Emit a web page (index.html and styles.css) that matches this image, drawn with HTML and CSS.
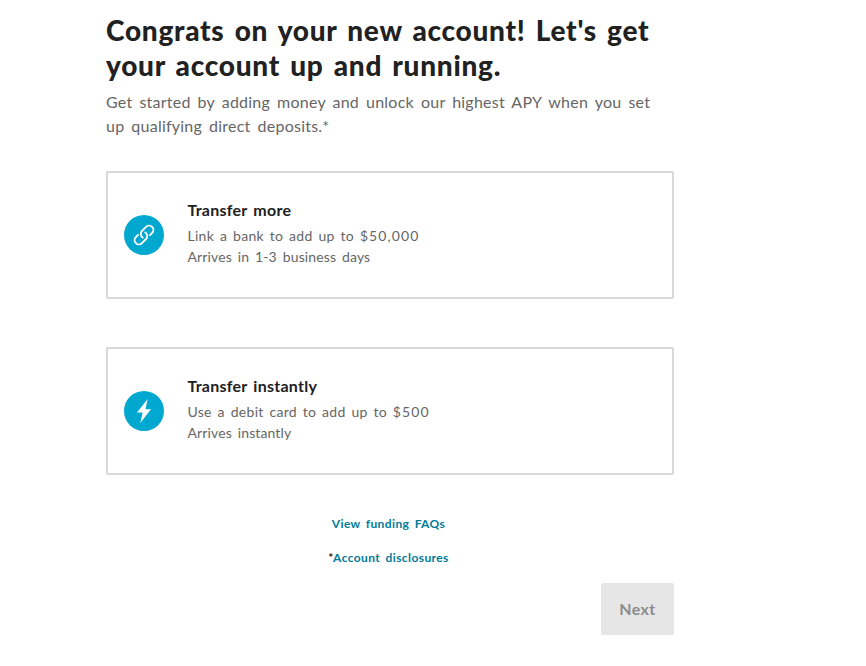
FILE: index.html
```html
<!DOCTYPE html>
<html lang="en">
<head>
  <meta charset="UTF-8">
  <meta name="viewport" content="width=device-width, initial-scale=1.0">
  <link rel="stylesheet" href="styles.css">
  <title>Fund your account</title>
</head>
<body>

  <main class="funding">
    <h1>Congrats on your new account! Let's get<br>your account up and running.</h1>
    <p class="intro">Get started by adding money and unlock our highest APY when you set<br>up qualifying direct deposits.*</p>

    <div class="option">
      <div class="option-icon">
        <svg width="40" height="40" viewBox="0 0 40 40" fill="none" stroke="#fff" stroke-width="1.9" stroke-linecap="round">
          <g transform="translate(20 20) rotate(-45)">
            <path d="M-4.2 -4.3H-7.2a4.3 4.3 0 0 0 0 8.6H-1.4a4.3 4.3 0 0 0 4.1-5.2"/>
            <path d="M4.2 4.3H7.2a4.3 4.3 0 0 0 0-8.6H1.4a4.3 4.3 0 0 0-4.1 5.2"/>
          </g>
        </svg>
      </div>
      <div class="option-text">
        <h2>Transfer more</h2>
        <p>Link a bank to add up to <span class="amount">$50,000</span></p>
        <p class="timing">Arrives in 1-3 business days</p>
      </div>
    </div>

    <div class="option">
      <div class="option-icon">
        <svg width="40" height="40" viewBox="0 0 40 40" fill="#fff">
          <path d="M23.7 8L13 21.6h5.6L16.3 32 27 18.3h-5.5z"/>
        </svg>
      </div>
      <div class="option-text">
        <h2>Transfer instantly</h2>
        <p>Use a debit card to add up to <span class="amount">$500</span></p>
        <p class="timing">Arrives instantly</p>
      </div>
    </div>

    <div class="links">
      <a>View funding FAQs</a>
      <div class="disclosure">*<a>Account disclosures</a></div>
    </div>

    <div class="actions">
      <button class="next-btn" disabled>Next</button>
    </div>
  </main>

</body>
</html>
```

FILE: styles.css
```css
body {
  font-family: Lato, sans-serif;
  background-color: #fff;
  color: #212121;
  margin: 0;
}

.funding {
  width: 568px;
  margin-left: 106px;
  padding-top: 13px;
}

h1, h2, p {
  margin: 0;
  white-space: nowrap;
}

h1 {
  font-size: 28px;
  line-height: 35px;
  font-weight: 900;
  letter-spacing: 0.74px;
  word-spacing: 2.8px;
}

.intro {
  margin-top: 7px;
  font-size: 16px;
  line-height: 24px;
  letter-spacing: 0.23px;
  word-spacing: 2.7px;
  color: #666;
}

.option {
  display: flex;
  align-items: center;
  box-sizing: border-box;
  height: 128px;
  margin-top: 48px;
  padding-left: 16px;
  border: 2px solid #d9d9d9;
  border-radius: 2px;
}

.intro + .option {
  margin-top: 33px;
}

.option-icon {
  width: 40px;
  height: 40px;
  margin-right: 23.5px;
  border-radius: 50%;
  background-color: #00a7cf;
}

.option-text {
  padding-bottom: 6px;
}

.option-text h2 {
  font-size: 16px;
  line-height: 24px;
  margin-bottom: 3px;
  letter-spacing: 0.25px;
  word-spacing: 2px;
}

.option-text p {
  font-size: 14px;
  line-height: 21px;
  letter-spacing: 0.28px;
  word-spacing: 2px;
  color: #666;
}

.option-text .amount {
  letter-spacing: 1.1px;
}

.option-text .timing {
  letter-spacing: 0.12px;
  word-spacing: 2.2px;
}

.links {
  margin-top: 40px;
  padding-right: 3px;
  text-align: center;
  font-size: 12px;
  line-height: 18px;
  font-weight: bold;
  letter-spacing: 0.4px;
  word-spacing: 2px;
}

.links a {
  color: #007b99;
}

.disclosure {
  margin-top: 16px;
}

.actions {
  display: flex;
  justify-content: flex-end;
  margin-top: 16px;
}

.next-btn {
  width: 73px;
  height: 52px;
  padding: 0 0 2px;
  border: none;
  border-radius: 2px;
  background-color: #e6e6e6;
  color: #8c8c8c;
  font-family: inherit;
  font-size: 16px;
  font-weight: bold;
  letter-spacing: 0.4px;
}
```
